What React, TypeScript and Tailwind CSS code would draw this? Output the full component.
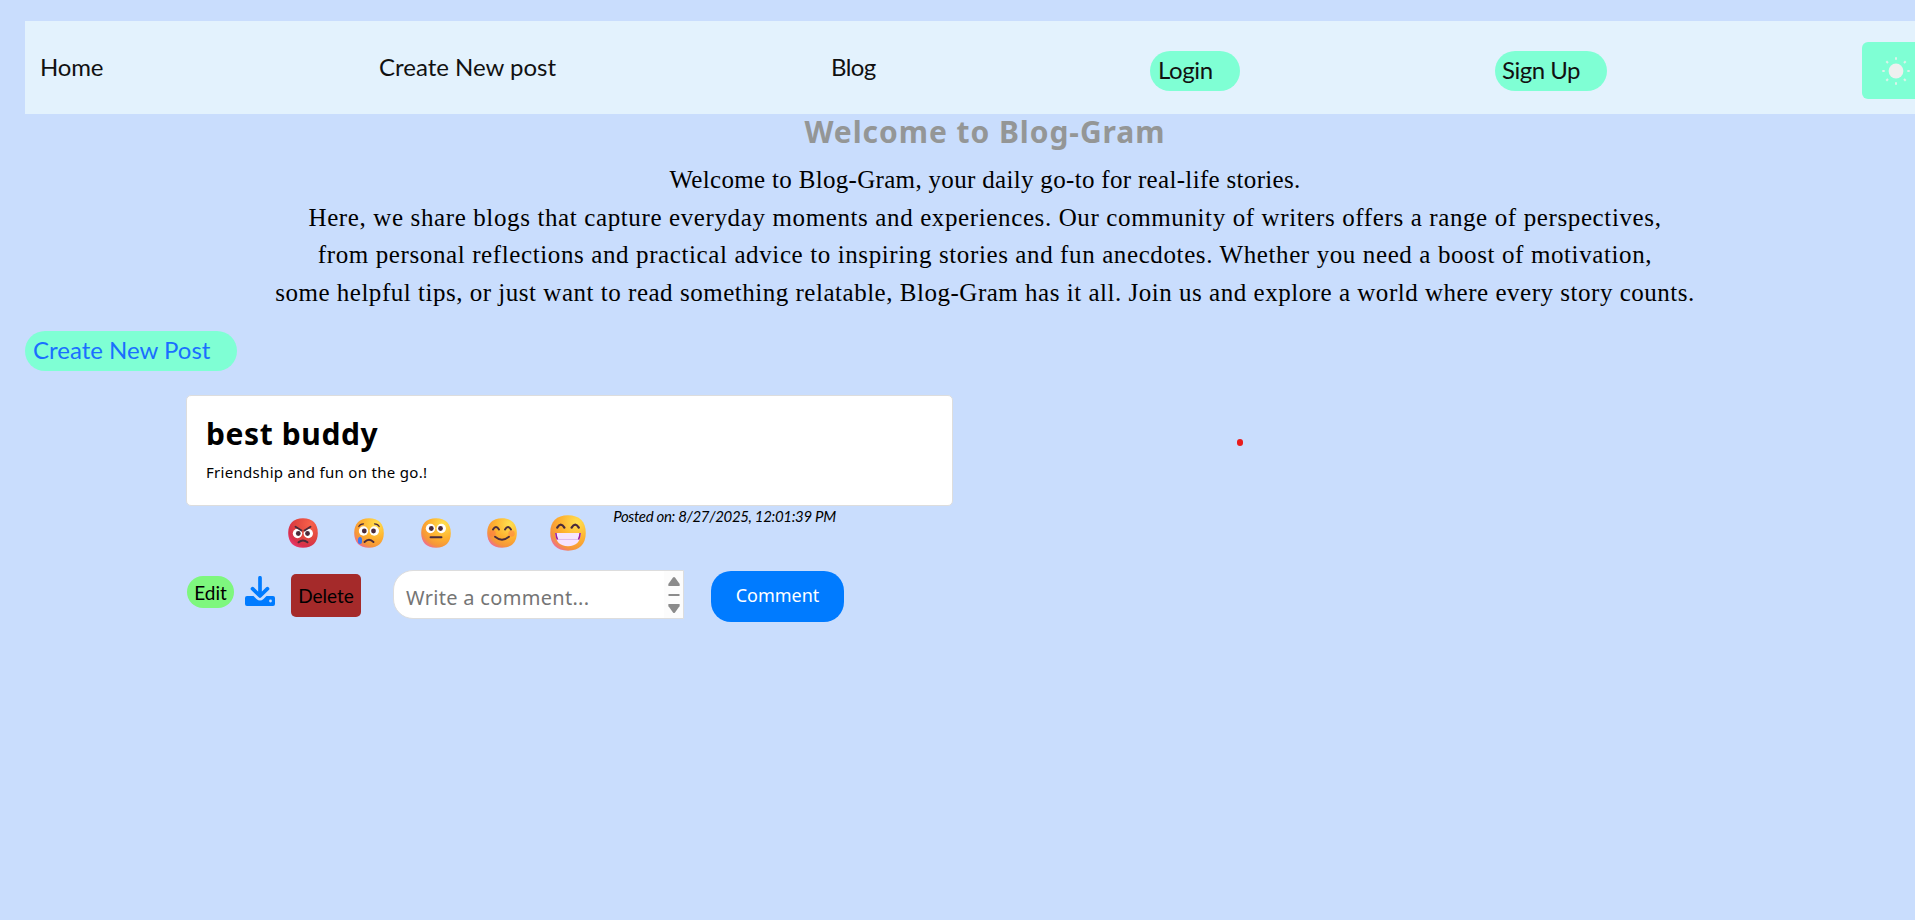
import { type ReactNode } from "react";

const gill = "font-['Lato',sans-serif]";
const lucida = "font-['Noto_Sans',sans-serif]";

function Face({ id, red, big, children }: { id: string; red?: boolean; big?: boolean; children: ReactNode }) {
  return (
    <svg viewBox="0 0 30 30" className={big ? "h-9 w-9 shrink-0" : "h-[30px] w-[30px] shrink-0"}>
      <defs>
        <radialGradient id={id} cx="0.75" cy="0.2" r="0.9">
          <stop offset="0" stopColor={red ? "#f8604a" : "#ffe04f"} />
          <stop offset="0.55" stopColor={red ? "#e0463f" : "#feb02f"} />
          <stop offset="0.85" stopColor={red ? "#d8304c" : "#f5953a"} />
          <stop offset="1" stopColor={red ? "#e8366a" : "#f0708a"} />
        </radialGradient>
      </defs>
      <path d="M15 .3C24.500 .3 29.800 5.500 29.800 15S24.500 29.700 15 29.700 .2 24.500 .2 15 5.500 .3 15 .3Z" fill={`url(#${id})`} />
      {children}
    </svg>
  );
}

const dark = "#4a2b3b";

function Eyes({ y }: { y: number }) {
  return (
    <>
      <circle cx="9.500" cy={y} r="4.700" fill="#fff" />
      <circle cx="20.300" cy={y} r="4.700" fill="#fff" />
      <circle cx="10.300" cy={y} r="2.400" fill={dark} />
      <circle cx="19.500" cy={y} r="2.400" fill={dark} />
    </>
  );
}

function Reactions() {
  const line = { fill: "none", stroke: dark, strokeWidth: 1.9, strokeLinecap: "round" as const };
  return (
    <div className="flex h-9 items-center gap-[36.3px]">
      <Face id="angry" red>
        <Eyes y={15.5} />
        <path d="M7.500 8.800 13.500 12.500M22.500 8.800 16.500 12.500M10.500 24.300Q15 20.500 19.500 24.300" {...line} />
      </Face>
      <Face id="sad">
        <Eyes y={13} />
        <path d="M4.800 8.500Q6 6 9.500 5.800M25.200 8.500Q24 6 20.500 5.800" {...line} strokeWidth={1.2} />
        <path d="M10.500 24Q15 19.500 19.500 24" {...line} />
        <path d="M4 20.500Q6 17 8 20.500V24Q8 26 6 26T4 24Z" fill="#3f78f0" />
      </Face>
      <Face id="neutral">
        <Eyes y={10.5} />
        <path d="M9.500 19.300H20.500" {...line} />
      </Face>
      <Face id="smile">
        <circle cx="5.500" cy="15.500" r="3.200" fill="#ff7048" opacity="0.45" />
        <circle cx="24.500" cy="15.500" r="3.200" fill="#ff7048" opacity="0.45" />
        <path d="M6 11.500Q9 6.500 12 11.500M18 11.500Q21 6.500 24 11.500M8 18.800Q15 24.500 22 18.800" {...line} />
      </Face>
      <div className="-ml-[3px] flex">
        <Face id="grin" big>
          <path d="M6 10.500Q9 5.500 12 10.500M18 10.500Q21 5.500 24 10.500" {...line} />
          <path d="M4.300 15H25.700Q25.200 26 15 26T4.300 15Z" fill="#f6e4ff" />
          <path d="M4.900 15Q5 18 6.300 20.500M25.100 15Q25 18 23.700 20.500" fill="none" stroke="#9c1c9c" strokeWidth="1.300" />
          <path d="M6.500 20.400H23.500" stroke="#d8b4ee" strokeWidth="0.700" />
        </Face>
      </div>
    </div>
  );
}

function Sun() {
  const angles = [0, 45, 90, 135, 180, 225, 270, 315];
  return (
    <svg viewBox="-14 -14 28 28" className="h-7 w-7">
      <circle r="7.400" fill="#eef0ef" />
      {angles.map((a) => (
        <path key={a} d="M0 -13.700V-11.300" stroke="#dcf3ea" strokeWidth="2" transform={`rotate(${a})`} />
      ))}
    </svg>
  );
}

function Download() {
  return (
    <svg viewBox="0 0 30 30" className="h-[30px] w-[30px]" fill="none">
      <path d="M2 20H8.500L11.500 23Q15 26 18.500 23L21.500 20H28Q30 20 30 22V28Q30 30 28 30H2Q0 30 0 28V22Q0 20 2 20Z" fill="#007bff" />
      <circle cx="25.500" cy="25" r="1.400" fill="#c9ddfd" />
      <path d="M15 1.800V19.500M7.500 12.700 15 20 22.500 12.700" stroke="#c9ddfd" strokeWidth="6" strokeLinejoin="round" />
      <path d="M15 1.800V19.500M7.500 12.700 15 20 22.500 12.700" stroke="#007bff" strokeWidth="3.700" strokeLinecap="round" strokeLinejoin="round" />
    </svg>
  );
}

export default function App() {
  return (
    <div className="h-[920px] w-full overflow-hidden bg-[#c9ddfd] pt-[21px] pl-[25px] text-black">
      <nav className={`${gill} flex h-[93px] w-[1930px] bg-[#e3f2fd] text-[24px] leading-[30px] whitespace-nowrap text-[#111]`}>
        <a className="mt-[31px] w-[339px] shrink-0 pl-[15px] tracking-[-0.200px]">Home</a>
        <a className="mt-[31px] w-[453px] shrink-0 pl-[15px]">Create New post</a>
        <a className="mt-[31px] w-[333px] shrink-0 pl-[14px] tracking-[-0.600px]">Blog</a>
        <a className="mt-[30px] mr-[255px] h-10 w-[90px] shrink-0 rounded-[20px] bg-[#7fffd4] pt-1 pl-2 tracking-[-0.400px]">Login</a>
        <a className="mt-[30px] mr-[255px] h-10 w-[112px] shrink-0 rounded-[20px] bg-[#7fffd4] pt-1 pl-[7px] tracking-[-0.500px]">Sign Up</a>
        <button className="mt-[21px] flex h-[57px] w-[68px] shrink-0 items-center justify-center rounded-[6px] bg-[#7fffd4]">
          <Sun />
        </button>
      </nav>

      <header className="w-[1920px] text-center">
        <h1 className={`${lucida} h-[47px] text-[30px] leading-[36px] font-bold tracking-[0.950px] text-[#949696]`}>Welcome to Blog-Gram</h1>
        <div className="flex flex-col items-center font-['Liberation_Serif',serif] text-[25px] leading-[37.5px] whitespace-nowrap">
          <p className="tracking-[0.320px]">Welcome to Blog-Gram, your daily go-to for real-life stories.</p>
          <p className="tracking-[0.620px]">Here, we share blogs that capture everyday moments and experiences. Our community of writers offers a range of perspectives,</p>
          <p className="tracking-[0.610px]">from personal reflections and practical advice to inspiring stories and fun anecdotes. Whether you need a boost of motivation,</p>
          <p className="tracking-[0.520px]">some helpful tips, or just want to read something relatable, Blog-Gram has it all. Join us and explore a world where every story counts.</p>
        </div>
      </header>

      <a className={`${gill} mt-5 block h-10 w-[212px] rounded-[20px] bg-[#7fffd4] pt-1 pl-2 text-[24px] leading-[30px] whitespace-nowrap text-[#1a6fff]`}>
        Create New Post
      </a>

      <main className="mt-[25px] ml-[161px] flex">
        <article className="-mt-px w-[767px]">
          <section className={`${lucida} h-[111px] rounded-[5px] border border-[#ddd] bg-white pt-5 pl-[19px]`}>
            <h2 className="h-[42px] text-[30px] leading-[36px] font-bold tracking-[0.600px]">best buddy</h2>
            <p className="text-[15px] leading-[28px] tracking-[0.300px]">Friendship and fun on the go.!</p>
          </section>
          <div className="flex h-[63px] pt-[9px] pl-[102px]">
            <Reactions />
            <span className={`${gill} -mt-[10px] ml-[27px] text-[15px] leading-[22px] tracking-[-0.330px] whitespace-nowrap italic`}>Posted on: 8/27/2025, 12:01:39 PM</span>
          </div>
          <div className="flex items-start">
            <button className={`${gill} mt-[7px] ml-px h-8 w-[47px] rounded-[16px] bg-[#7ef77e] text-[19px] leading-[31px]`}>Edit</button>
            <span className="mt-[7px] ml-[11px]"><Download /></span>
            <button className={`${gill} mt-[5px] ml-4 h-[43px] w-[70px] rounded-[5px] bg-[#a52a2a] text-[19px] leading-[43px]`}>Delete</button>
            <div className={`${lucida} mt-[0.500px] ml-8 flex h-[49px] w-[291px] justify-between rounded-l-[20px] border border-[#ddd] bg-white`}>
              <span className="pt-[12px] pl-3 text-[20px] leading-[30px] tracking-[0.300px] text-[#757575]">Write a comment...</span>
              <span className="flex w-[19px] justify-center bg-[#fcfcfc]">
                <svg viewBox="0 0 14 47" className="h-[47px] w-[14px]" fill="#8b8b8b">
                  <path d="M6 6.500Q7 5.500 8 6.500L12.500 12.800Q13.500 15 12 15H2Q.5 15 1.500 12.800Z" />
                  <path d="M1.500 23H12.500V25H1.500Z" />
                  <path d="M6 41.500Q7 42.500 8 41.500L12.500 35.200Q13.500 33 12 33H2Q.5 33 1.500 35.200Z" />
                </svg>
              </span>
            </div>
            <button className={`${lucida} mt-[2px] ml-[27px] h-[51px] w-[133px] rounded-[20px] bg-[#007bff] pb-[3px] text-[18px] leading-[48px] text-white`}>Comment</button>
          </div>
        </article>
        <span className="mt-[43px] ml-[284px] h-[7px] w-[6px] rounded-full bg-[#ea1c1c]" />
      </main>
    </div>
  );
}
